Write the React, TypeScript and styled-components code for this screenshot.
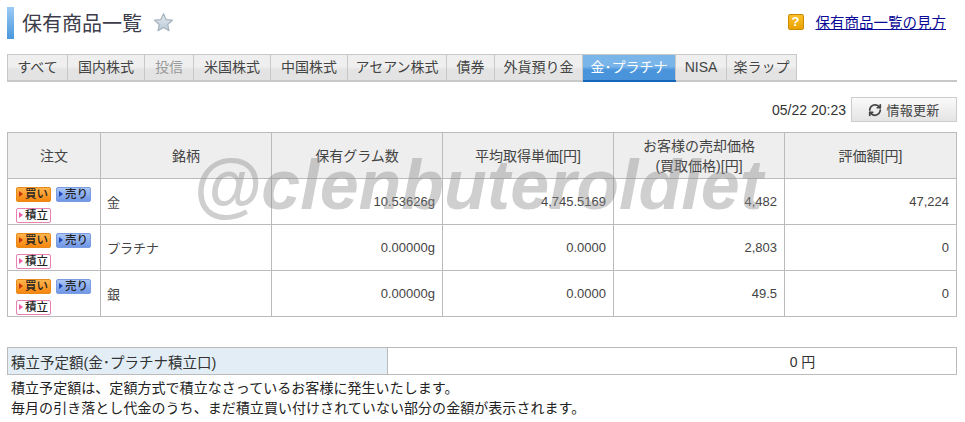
import React from "react";
import styled, { createGlobalStyle } from "styled-components";
import { RefreshCw } from "lucide-react";

const GlobalStyle = createGlobalStyle`
  html, body {
    margin: 0;
    padding: 0;
    background: #fff;
  }
  body {
    font-family: "Liberation Sans", "Noto Sans CJK JP", sans-serif;
    font-size: 13px;
    color: #333;
  }
`;

const Page = styled.div`
  position: relative;
  width: 950px;
  height: 415px;
  padding: 7px 8px 0 7px;
  box-sizing: content-box;
  overflow: hidden;
`;

const Header = styled.div`
  display: flex;
  align-items: center;
  justify-content: space-between;
  height: 32px;
`;

const TitleWrap = styled.div`
  display: flex;
  align-items: center;
  height: 100%;
`;

const TitleBar = styled.span`
  width: 7px;
  height: 32px;
  background: linear-gradient(#9ccbf5, #4a97dc);
`;

const Title = styled.h1`
  margin: 1px 0 0 8px;
  font-size: 20px;
  font-weight: 400;
  line-height: 32px;
  color: #3c3c4a;
`;

const Star = styled.svg`
  width: 21px;
  height: 21px;
  margin: -2px 0 0 11px;
`;

const HelpWrap = styled.div`
  display: flex;
  align-items: center;
  margin: -3px 11px 0 0;
`;

const HelpIcon = styled.span`
  width: 16px;
  height: 16px;
  margin-right: 12px;
  box-sizing: border-box;
  border: 1px solid #c98a00;
  border-radius: 2px;
  background: linear-gradient(#fbc02a, #eaa200);
  color: #fff;
  font-size: 13px;
  font-weight: 700;
  line-height: 14px;
  text-align: center;
`;

const HelpLink = styled.a`
  color: #0a0a96;
  font-size: 14.5px;
  text-decoration: underline;
`;

const Tabs = styled.div`
  display: flex;
  height: 28px;
  margin-top: 15px;
  border-bottom: 2px solid #c8c8c8;
  box-sizing: border-box;
`;

const Tab = styled.div<{ $w: number; $active?: boolean; $disabled?: boolean }>`
  width: ${(p) => p.$w}px;
  box-sizing: border-box;
  border: 1px solid #c8c8c8;
  border-bottom: 0;
  border-left-width: 0;
  &:first-child {
    border-left-width: 1px;
  }
  background: ${(p) =>
    p.$active
      ? "linear-gradient(#7ab5ea 0, #7ab5ea 45%, #4a94dc 60%, #4a94dc 100%)"
      : "linear-gradient(#efefef 0, #efefef 45%, #e3e3e3 60%, #e3e3e3 100%)"};
  color: ${(p) => (p.$active ? "#fff" : p.$disabled ? "#999" : "#444")};
  box-shadow: ${(p) => (p.$active ? "0 2px 0 #1467b8" : "none")};
  font-size: 14px;
  line-height: 25px;
  text-align: center;
  white-space: nowrap;
`;

const UpdateRow = styled.div`
  display: flex;
  align-items: center;
  justify-content: flex-end;
  height: 25px;
  margin-top: 15px;
`;

const UpdateTime = styled.span`
  margin-right: 5px;
  font-size: 14px;
  color: #333;
`;

const UpdateButton = styled.div`
  display: flex;
  align-items: center;
  justify-content: center;
  gap: 4px;
  width: 106px;
  height: 25px;
  box-sizing: border-box;
  border: 1px solid #ccc;
  background: linear-gradient(#fafafa, #e4e4e4);
  font-size: 13px;
  letter-spacing: 0.3px;
  color: #444;
`;

const Table = styled.table`
  width: 950px;
  margin-top: 10px;
  border-collapse: collapse;
  table-layout: fixed;
`;

const Th = styled.th<{ $w?: number }>`
  ${(p) => (p.$w ? `width: ${p.$w}px;` : "")}
  height: 45px;
  padding: 0;
  border: 1px solid #bbb;
  background: #eee;
  font-weight: 400;
  font-size: 14px;
  line-height: 20px;
  color: #444;
  text-align: center;
`;

const Td = styled.td<{ $left?: boolean }>`
  height: 45px;
  padding: ${(p) => (p.$left ? "0 0 0 6px" : "0 7px 0 0")};
  border: 1px solid #bbb;
  font-size: 13px;
  color: #444;
  text-align: ${(p) => (p.$left ? "left" : "right")};
`;

const OrderCell = styled.td`
  padding: 6px 0 0 8px;
  border: 1px solid #bbb;
`;

const Orders = styled.div`
  display: flex;
  flex-wrap: wrap;
  gap: 6px 5px;
  width: 80px;
`;

const palette = {
  buy: { bg: "linear-gradient(#ffb54d, #f5860f)", border: "#e8891a", arrow: "#c8320a" },
  sell: { bg: "linear-gradient(#a9c5f5, #6f97e6)", border: "#7a9ce0", arrow: "#1c46b8" },
  save: { bg: "#fff", border: "#ea7fb4", arrow: "#ea5fa5" },
};

const OrderButton = styled.span<{ $kind: keyof typeof palette }>`
  display: flex;
  align-items: center;
  width: 35px;
  height: 15px;
  box-sizing: border-box;
  padding-left: 2px;
  border: 1px solid ${(p) => palette[p.$kind].border};
  border-radius: 2px;
  background: ${(p) => palette[p.$kind].bg};
  font-size: 11.5px;
  font-weight: 500;
  line-height: 13px;
  color: #222;
  &::before {
    content: "";
    margin-right: 2px;
    border-left: 4px solid ${(p) => palette[p.$kind].arrow};
    border-top: 3px solid transparent;
    border-bottom: 3px solid transparent;
  }
`;

const Reserve = styled.table`
  width: 950px;
  margin-top: 30px;
  border-collapse: collapse;
  table-layout: fixed;
`;

const ReserveLabel = styled.td`
  width: 376px;
  height: 26px;
  padding: 0 0 0 3px;
  border: 1px solid #bbb;
  background: #e2edf5;
  font-size: 14.5px;
  color: #333;
`;

const ReserveValue = styled.td`
  padding-left: 262px;
  border: 1px solid #bbb;
  font-size: 14px;
  color: #333;
  text-align: center;
`;

const Notes = styled.p`
  margin: 3px 0 0 4px;
  font-size: 14px;
  letter-spacing: 0.05px;
  line-height: 20px;
  color: #222;
  white-space: nowrap;
`;

const Watermark = styled.div`
  position: absolute;
  left: 193px;
  top: 143px;
  font-size: 70px;
  font-weight: 700;
  font-style: italic;
  line-height: 84px;
  color: rgba(140, 140, 140, 0.42);
  white-space: nowrap;
  pointer-events: none;
`;

const tabs = [
  { label: "すべて", w: 61 },
  { label: "国内株式", w: 77 },
  { label: "投信", w: 49, disabled: true },
  { label: "米国株式", w: 77 },
  { label: "中国株式", w: 77 },
  { label: "アセアン株式", w: 99 },
  { label: "債券", w: 48 },
  { label: "外貨預り金", w: 88 },
  { label: "金･プラチナ", w: 93, active: true },
  { label: "NISA", w: 51 },
  { label: "楽ラップ", w: 70 },
];

const rows = [
  { name: "金", grams: "10.53626g", avg: "4,745.5169", price: "4,482", value: "47,224" },
  { name: "プラチナ", grams: "0.00000g", avg: "0.0000", price: "2,803", value: "0" },
  { name: "銀", grams: "0.00000g", avg: "0.0000", price: "49.5", value: "0" },
];

export default function App() {
  return (
    <>
      <GlobalStyle />
      <Page>
        <Header>
          <TitleWrap>
            <TitleBar />
            <Title>保有商品一覧</Title>
            <Star viewBox="0 0 24 24">
              <defs>
                <linearGradient id="starFill" x1="0" y1="0" x2="0" y2="1">
                  <stop offset="0" stopColor="#e4e9ee" />
                  <stop offset="1" stopColor="#b9cbda" />
                </linearGradient>
              </defs>
              <path
                d="M12 2l3 6.6 7.2.8-5.4 4.8 1.5 7.1L12 17.7l-6.3 3.6 1.5-7.1L1.8 9.4 9 8.6z"
                fill="url(#starFill)"
                stroke="#a9b4bd"
                strokeWidth="1.4"
                strokeLinejoin="round"
              />
            </Star>
          </TitleWrap>
          <HelpWrap>
            <HelpIcon>?</HelpIcon>
            <HelpLink>保有商品一覧の見方</HelpLink>
          </HelpWrap>
        </Header>

        <Tabs>
          {tabs.map((t) => (
            <Tab key={t.label} $w={t.w} $active={t.active} $disabled={t.disabled}>
              {t.label}
            </Tab>
          ))}
        </Tabs>

        <UpdateRow>
          <UpdateTime>05/22 20:23</UpdateTime>
          <UpdateButton>
            <RefreshCw size={14} strokeWidth={3} color="#444" />
            情報更新
          </UpdateButton>
        </UpdateRow>

        <Table>
          <thead>
            <tr>
              <Th $w={92}>注文</Th>
              <Th $w={170}>銘柄</Th>
              <Th $w={170}>保有グラム数</Th>
              <Th $w={170}>平均取得単価[円]</Th>
              <Th $w={170}>
                お客様の売却価格
                <br />
                (買取価格)[円]
              </Th>
              <Th>評価額[円]</Th>
            </tr>
          </thead>
          <tbody>
            {rows.map((r) => (
              <tr key={r.name}>
                <OrderCell>
                  <Orders>
                    <OrderButton $kind="buy">買い</OrderButton>
                    <OrderButton $kind="sell">売り</OrderButton>
                    <OrderButton $kind="save">積立</OrderButton>
                  </Orders>
                </OrderCell>
                <Td $left>{r.name}</Td>
                <Td>{r.grams}</Td>
                <Td>{r.avg}</Td>
                <Td>{r.price}</Td>
                <Td>{r.value}</Td>
              </tr>
            ))}
          </tbody>
        </Table>

        <Reserve>
          <tbody>
            <tr>
              <ReserveLabel>積立予定額(金･プラチナ積立口)</ReserveLabel>
              <ReserveValue>0 円</ReserveValue>
            </tr>
          </tbody>
        </Reserve>

        <Notes>
          積立予定額は、定額方式で積立なさっているお客様に発生いたします。
          <br />
          毎月の引き落とし代金のうち、まだ積立買い付けされていない部分の金額が表示されます。
        </Notes>

        <Watermark>@clenbuteroldiet</Watermark>
      </Page>
    </>
  );
}
